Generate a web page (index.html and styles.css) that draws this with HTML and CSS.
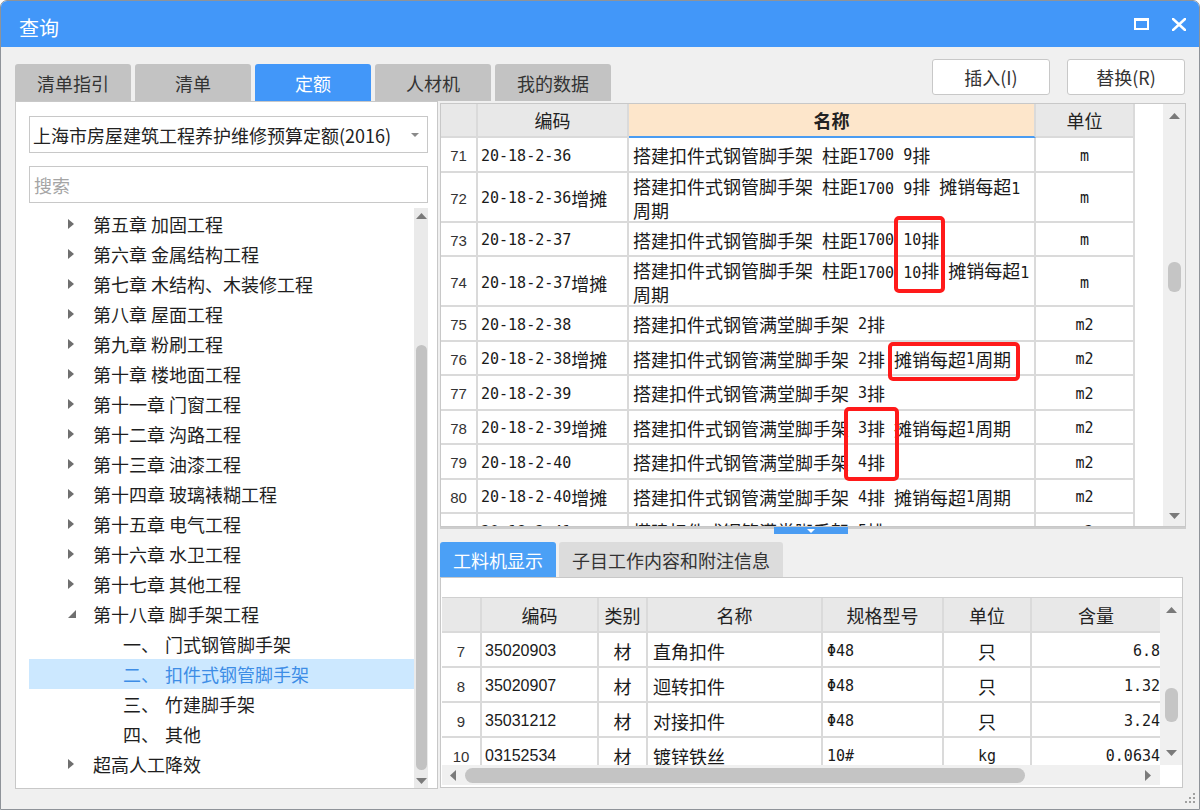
FILE: index.html
```html
<!DOCTYPE html>
<html lang="zh-CN">
<head>
<meta charset="utf-8">
<title>查询</title>
<link rel="stylesheet" href="styles.css">
</head>
<body>
<div class="win">
  <div class="titlebar">
    <span class="title">查询</span>
    <div class="wbtns">
      <svg width="15" height="12" viewBox="0 0 15 12"><rect x="1" y="1.5" width="13" height="9.5" fill="none" stroke="#fff" stroke-width="2"/><rect x="0" y="0" width="15" height="3" fill="#fff"/></svg>
      <svg width="14" height="13" viewBox="0 0 14 13"><path d="M1 1L13 12M13 1L1 12" stroke="#fff" stroke-width="2.6" stroke-linecap="square"/></svg>
    </div>
  </div>

  <div class="toprow">
    <div class="tabs">
      <div class="tab">清单指引</div>
      <div class="tab">清单</div>
      <div class="tab on">定额</div>
      <div class="tab">人材机</div>
      <div class="tab">我的数据</div>
    </div>
    <div class="actions">
      <div class="btn">插入(I)</div>
      <div class="btn">替换(R)</div>
    </div>
  </div>

  <div class="main">
    <div class="left">
      <div class="select">
        <span>上海市房屋建筑工程养护维修预算定额(2016)</span>
        <svg width="8" height="4" viewBox="0 0 8 4"><path d="M0 0H8L4 4Z" fill="#8a8a8a"/></svg>
      </div>
      <div class="search">搜索</div>
      <div class="tree">
        <div class="list">
          <div class="node"><span class="arr"><svg width="6" height="10" viewBox="0 0 6 10"><path d="M0 0L6 5L0 10Z" fill="#6f6f6f"/></svg></span>第五章 加固工程</div>
          <div class="node"><span class="arr"><svg width="6" height="10" viewBox="0 0 6 10"><path d="M0 0L6 5L0 10Z" fill="#6f6f6f"/></svg></span>第六章 金属结构工程</div>
          <div class="node"><span class="arr"><svg width="6" height="10" viewBox="0 0 6 10"><path d="M0 0L6 5L0 10Z" fill="#6f6f6f"/></svg></span>第七章 木结构、木装修工程</div>
          <div class="node"><span class="arr"><svg width="6" height="10" viewBox="0 0 6 10"><path d="M0 0L6 5L0 10Z" fill="#6f6f6f"/></svg></span>第八章 屋面工程</div>
          <div class="node"><span class="arr"><svg width="6" height="10" viewBox="0 0 6 10"><path d="M0 0L6 5L0 10Z" fill="#6f6f6f"/></svg></span>第九章 粉刷工程</div>
          <div class="node"><span class="arr"><svg width="6" height="10" viewBox="0 0 6 10"><path d="M0 0L6 5L0 10Z" fill="#6f6f6f"/></svg></span>第十章 楼地面工程</div>
          <div class="node"><span class="arr"><svg width="6" height="10" viewBox="0 0 6 10"><path d="M0 0L6 5L0 10Z" fill="#6f6f6f"/></svg></span>第十一章 门窗工程</div>
          <div class="node"><span class="arr"><svg width="6" height="10" viewBox="0 0 6 10"><path d="M0 0L6 5L0 10Z" fill="#6f6f6f"/></svg></span>第十二章 沟路工程</div>
          <div class="node"><span class="arr"><svg width="6" height="10" viewBox="0 0 6 10"><path d="M0 0L6 5L0 10Z" fill="#6f6f6f"/></svg></span>第十三章 油漆工程</div>
          <div class="node"><span class="arr"><svg width="6" height="10" viewBox="0 0 6 10"><path d="M0 0L6 5L0 10Z" fill="#6f6f6f"/></svg></span>第十四章 玻璃裱糊工程</div>
          <div class="node"><span class="arr"><svg width="6" height="10" viewBox="0 0 6 10"><path d="M0 0L6 5L0 10Z" fill="#6f6f6f"/></svg></span>第十五章 电气工程</div>
          <div class="node"><span class="arr"><svg width="6" height="10" viewBox="0 0 6 10"><path d="M0 0L6 5L0 10Z" fill="#6f6f6f"/></svg></span>第十六章 水卫工程</div>
          <div class="node"><span class="arr"><svg width="6" height="10" viewBox="0 0 6 10"><path d="M0 0L6 5L0 10Z" fill="#6f6f6f"/></svg></span>第十七章 其他工程</div>
          <div class="node"><span class="arr"><svg width="8" height="8" viewBox="0 0 8 8"><path d="M8 0V8H0Z" fill="#707070"/></svg></span>第十八章 脚手架工程</div>
          <div class="node child"><span class="ord">一、</span>门式钢管脚手架</div>
          <div class="node child sel"><span class="ord">二、</span>扣件式钢管脚手架</div>
          <div class="node child"><span class="ord">三、</span>竹建脚手架</div>
          <div class="node child"><span class="ord">四、</span>其他</div>
          <div class="node"><span class="arr"><svg width="6" height="10" viewBox="0 0 6 10"><path d="M0 0L6 5L0 10Z" fill="#6f6f6f"/></svg></span>超高人工降效</div>
        </div>
        <div class="vs">
          <svg width="11" height="6" viewBox="0 0 11 6"><path d="M0 6L5.5 0L11 6Z" fill="#7a7a7a"/></svg>
          <div class="thumb"></div>
          <svg class="down" width="11" height="6" viewBox="0 0 11 6"><path d="M0 0H11L5.5 6Z" fill="#7a7a7a"/></svg>
        </div>
      </div>
    </div>

    <div class="right">
      <div class="gtop">
        <div class="tbl">
          <div class="r h"><div class="c"></div><div class="c">编码</div><div class="c nm">名称</div><div class="c">单位</div><div class="f"></div></div>
          <div class="r"><div class="c num">71</div><div class="c code"><span class="a">20-18-2-36</span></div><div class="c nm">搭建扣件式钢管脚手架<span class="a"> </span>柱距<span class="a">1700 9</span>排</div><div class="c unit"><span class="a">m</span></div><div class="f"></div></div>
          <div class="r d"><div class="c num">72</div><div class="c code"><span class="a">20-18-2-36</span>增摊</div><div class="c nm"><div>搭建扣件式钢管脚手架<span class="a"> </span>柱距<span class="a">1700 9</span>排<span class="a"> </span>摊销每超<span class="a">1</span><br>周期</div></div><div class="c unit"><span class="a">m</span></div><div class="f"></div></div>
          <div class="r"><div class="c num">73</div><div class="c code"><span class="a">20-18-2-37</span></div><div class="c nm">搭建扣件式钢管脚手架<span class="a"> </span>柱距<span class="a">1700 10</span>排</div><div class="c unit"><span class="a">m</span></div><div class="f"></div></div>
          <div class="r d"><div class="c num">74</div><div class="c code"><span class="a">20-18-2-37</span>增摊</div><div class="c nm"><div>搭建扣件式钢管脚手架<span class="a"> </span>柱距<span class="a">1700 10</span>排<span class="a"> </span>摊销每超<span class="a">1</span><br>周期</div></div><div class="c unit"><span class="a">m</span></div><div class="f"></div></div>
          <div class="r"><div class="c num">75</div><div class="c code"><span class="a">20-18-2-38</span></div><div class="c nm">搭建扣件式钢管满堂脚手架<span class="a"> 2</span>排</div><div class="c unit"><span class="a">m2</span></div><div class="f"></div></div>
          <div class="r"><div class="c num">76</div><div class="c code"><span class="a">20-18-2-38</span>增摊</div><div class="c nm">搭建扣件式钢管满堂脚手架<span class="a"> 2</span>排<span class="a"> </span>摊销每超<span class="a">1</span>周期</div><div class="c unit"><span class="a">m2</span></div><div class="f"></div></div>
          <div class="r"><div class="c num">77</div><div class="c code"><span class="a">20-18-2-39</span></div><div class="c nm">搭建扣件式钢管满堂脚手架<span class="a"> 3</span>排</div><div class="c unit"><span class="a">m2</span></div><div class="f"></div></div>
          <div class="r"><div class="c num">78</div><div class="c code"><span class="a">20-18-2-39</span>增摊</div><div class="c nm">搭建扣件式钢管满堂脚手架<span class="a"> 3</span>排<span class="a"> </span>摊销每超<span class="a">1</span>周期</div><div class="c unit"><span class="a">m2</span></div><div class="f"></div></div>
          <div class="r"><div class="c num">79</div><div class="c code"><span class="a">20-18-2-40</span></div><div class="c nm">搭建扣件式钢管满堂脚手架<span class="a"> 4</span>排</div><div class="c unit"><span class="a">m2</span></div><div class="f"></div></div>
          <div class="r"><div class="c num">80</div><div class="c code"><span class="a">20-18-2-40</span>增摊</div><div class="c nm">搭建扣件式钢管满堂脚手架<span class="a"> 4</span>排<span class="a"> </span>摊销每超<span class="a">1</span>周期</div><div class="c unit"><span class="a">m2</span></div><div class="f"></div></div>
          <div class="r"><div class="c num">81</div><div class="c code"><span class="a">20-18-2-41</span></div><div class="c nm">搭建扣件式钢管满堂脚手架<span class="a"> 5</span>排</div><div class="c unit"><span class="a">m2</span></div><div class="f"></div></div>
        </div>
        <div class="vs2">
          <svg width="11" height="6" viewBox="0 0 11 6"><path d="M0 6L5.5 0L11 6Z" fill="#7a7a7a"/></svg>
          <div class="thumb"></div>
          <svg class="down" width="11" height="6" viewBox="0 0 11 6"><path d="M0 0H11L5.5 6Z" fill="#7a7a7a"/></svg>
        </div>
      </div>

      <div class="split">
        <div class="handle"><svg width="8" height="4" viewBox="0 0 8 4"><path d="M0 0H8L4 4Z" fill="#fff"/></svg></div>
      </div>

      <div class="btabs">
        <div class="btab on">工料机显示</div>
        <div class="btab wide">子目工作内容和附注信息</div>
      </div>

      <div class="gbot">
        <div class="frame">
          <div class="bmain">
            <div class="btbl">
              <div class="br h"><div class="c"></div><div class="c">编码</div><div class="c">类别</div><div class="c">名称</div><div class="c">规格型号</div><div class="c">单位</div><div class="c last">含量</div></div>
              <div class="br"><div class="c num">7</div><div class="c code">35020903</div><div class="c mid">材</div><div class="c nm">直角扣件</div><div class="c spec"><span class="a">Φ48</span></div><div class="c mid">只</div><div class="c qty last"><span class="a">6.8</span></div></div>
              <div class="br"><div class="c num">8</div><div class="c code">35020907</div><div class="c mid">材</div><div class="c nm">迴转扣件</div><div class="c spec"><span class="a">Φ48</span></div><div class="c mid">只</div><div class="c qty last"><span class="a">1.32</span></div></div>
              <div class="br"><div class="c num">9</div><div class="c code">35031212</div><div class="c mid">材</div><div class="c nm">对接扣件</div><div class="c spec"><span class="a">Φ48</span></div><div class="c mid">只</div><div class="c qty last"><span class="a">3.24</span></div></div>
              <div class="br"><div class="c num">10</div><div class="c code">03152534</div><div class="c mid">材</div><div class="c nm">镀锌铁丝</div><div class="c spec"><span class="a">10#</span></div><div class="c mid"><span class="a">kg</span></div><div class="c qty last"><span class="a">0.0634</span></div></div>
            </div>
            <div class="vs3">
              <svg width="11" height="6" viewBox="0 0 11 6"><path d="M0 6L5.5 0L11 6Z" fill="#7a7a7a"/></svg>
              <div class="thumb"></div>
              <svg class="down" width="11" height="6" viewBox="0 0 11 6"><path d="M0 0H11L5.5 6Z" fill="#7a7a7a"/></svg>
            </div>
          </div>
          <div class="hs">
            <div class="track">
              <svg width="6" height="11" viewBox="0 0 6 11"><path d="M6 0V11L0 5.5Z" fill="#7a7a7a"/></svg>
              <div class="hthumb"></div>
              <svg class="rarr" width="6" height="11" viewBox="0 0 6 11"><path d="M0 0V11L6 5.5Z" fill="#7a7a7a"/></svg>
            </div>
            <div class="corner"></div>
          </div>
        </div>
      </div>
    </div>
  </div>

  <svg class="grip" width="12" height="12" viewBox="0 0 12 12"><g fill="#a0a0a0"><rect x="9" y="1" width="2" height="2"/><rect x="9" y="5" width="2" height="2"/><rect x="5" y="5" width="2" height="2"/><rect x="9" y="9" width="2" height="2"/><rect x="5" y="9" width="2" height="2"/><rect x="1" y="9" width="2" height="2"/></g></svg>

  <div class="mark m1"></div>
  <div class="mark m2"></div>
  <div class="mark m3"></div>
</div>
</body>
</html>
```

FILE: styles.css
```css
* { box-sizing: border-box; }
html, body { margin: 0; padding: 0; }
body {
  width: 1200px;
  height: 810px;
  overflow: hidden;
  background: #fff;
  font-family: "Noto Sans CJK SC", "Noto Sans", sans-serif;
  color: #222;
}
.win {
  position: relative;
  width: 1200px;
  height: 810px;
  border: 1px solid #8f9399;
  border-radius: 7px 7px 0 0;
  background: #f0f0f0;
  overflow: hidden;
  display: flex;
  flex-direction: column;
}
.titlebar {
  height: 46px;
  flex: none;
  background: #4297f9;
  display: flex;
  align-items: center;
  justify-content: space-between;
  padding: 0 13px 0 18px;
  color: #fff;
}
.title { font-size: 20px; margin-top: 6px; }
.wbtns { display: flex; align-items: center; gap: 23px; }
.wbtns svg { display: block; }

.toprow {
  height: 54px;
  flex: none;
  display: flex;
  justify-content: space-between;
  padding: 0 14px;
}
.tabs { display: flex; gap: 4px; align-self: flex-end; }
.tab {
  width: 116px;
  height: 37px;
  background: #c3c3c3;
  border-radius: 3px 3px 0 0;
  font-size: 18px;
  color: #333;
  display: flex;
  align-items: center;
  justify-content: center;
}
.tab.on { background: #4297f9; color: #fff; }
.actions { display: flex; gap: 17px; margin-top: 12px; }
.btn {
  width: 118px;
  height: 36px;
  background: #fff;
  border: 1px solid #c8c8c8;
  border-radius: 3px;
  font-size: 18px;
  color: #333;
  display: flex;
  align-items: center;
  justify-content: center;
}

.main {
  flex: none;
  height: 688px;
  display: flex;
  gap: 2px;
  padding-left: 14px;
}
.left {
  width: 423px;
  background: #fff;
  border: 1px solid #c8c8c8;
  padding: 14px 9px 0 13px;
  display: flex;
  flex-direction: column;
}
.select {
  flex: none;
  height: 37px;
  border: 1px solid #c8c8c8;
  display: flex;
  align-items: center;
  justify-content: space-between;
  padding: 0 8px 0 3px;
  font-size: 18px;
  color: #222;
  white-space: nowrap;
}
.search {
  flex: none;
  height: 37px;
  margin-top: 13px;
  border: 1px solid #c8c8c8;
  padding-left: 4px;
  font-size: 18px;
  color: #a5a5a5;
  display: flex;
  align-items: center;
}
.tree {
  flex: 1;
  margin-top: 5px;
  display: flex;
  min-height: 0;
}
.list { flex: 1; padding-top: 1px; overflow: hidden; }
.node {
  height: 30px;
  display: flex;
  align-items: center;
  font-size: 18px;
  color: #1e1e1e;
  white-space: nowrap;
}
.node .arr {
  width: 8px;
  margin-left: 39px;
  margin-right: 17px;
  display: flex;
  align-items: center;
}
.node.child { padding-left: 94px; }
.node .ord { display: inline-block; width: 42px; }
.node.sel { background: #cce8ff; color: #3d8de6; }

.vs {
  width: 14px;
  background: #eaeaea;
  display: flex;
  flex-direction: column;
  align-items: center;
  padding: 5px 0 4px;
}
.vs svg, .vs2 svg, .vs3 svg, .hs svg { display: block; flex: none; }
.vs .thumb {
  margin-top: 126px;
  width: 11px;
  height: 425px;
  background: #c2c2c2;
  border-radius: 6px;
}
.down { margin-top: auto; }

.right {
  width: 746px;
  display: flex;
  flex-direction: column;
  padding-top: 2px;
}
.gtop {
  flex: none;
  height: 424px;
  border: 1px solid #c8c8c8;
  background: #fff;
  display: flex;
  overflow: hidden;
}
.tbl { width: 722px; overflow: hidden; }
.r {
  display: grid;
  grid-template-columns: 37px 151px 407px 99px 28px;
  height: 34.5px;
  font-size: 18px;
  color: #1a1a1a;
}
.r.h { height: 34px; }
.r.d { height: 50px; }
.r .c {
  border-right: 2px solid #dadada;
  border-bottom: 2px solid #dadada;
  display: flex;
  align-items: center;
  white-space: nowrap;
  overflow: hidden;
  padding-top: 3px;
}
.r.h .c { background: #e8e8e8; justify-content: center; color: #222; padding-top: 0; }
.r.h .nm { background: #fde6cb; font-weight: bold; border-bottom-color: #4a9cf2; padding-left: 0; }
.c.num {
  justify-content: center;
  font-family: "Liberation Sans", sans-serif;
  font-size: 15px;
  color: #333;
}
.r .code { padding-left: 3px; }
.r .nm { padding-left: 4px; line-height: 21px; }
.c.unit { justify-content: center; }
.a {
  font-family: "DejaVu Sans Mono", monospace;
  font-size: 15px;
  white-space: pre;
}

.vs2 {
  width: 22px;
  background: #efefef;
  display: flex;
  flex-direction: column;
  align-items: center;
  padding: 9px 0 7px;
}
.vs2 .thumb {
  margin-top: 143px;
  width: 13px;
  height: 30px;
  background: #c5c5c5;
  border-radius: 6px;
}

.split {
  flex: none;
  height: 15px;
  background: linear-gradient(#cdcdcd, #cdcdcd) top left / 100% 2px no-repeat;
}
.handle {
  margin-left: 334px;
  width: 74px;
  height: 7px;
  background: #4a9cf2;
  display: flex;
  justify-content: center;
  align-items: center;
}
.handle svg { display: block; }

.btabs { flex: none; height: 35px; display: flex; gap: 3px; }
.btab {
  width: 116px;
  background: #dcdcdc;
  border-radius: 3px 3px 0 0;
  font-size: 18px;
  color: #333;
  display: flex;
  align-items: center;
  justify-content: center;
}
.btab.on { background: #4ba0f6; color: #fff; }
.btab.wide { width: 224px; }

.gbot {
  flex: none;
  width: 743px;
  height: 211px;
  border: 1px solid #c8c8c8;
  background: #fff;
  padding: 19px 0 2px 1px;
}
.frame {
  height: 188px;
  border-top: 1px solid #d0d0d0;
  display: flex;
  flex-direction: column;
}
.bmain { flex: none; height: 167px; display: flex; }
.btbl { width: 718px; overflow: hidden; }
.br {
  display: grid;
  grid-template-columns: 40px 117px 49px 175px 121px 88px 128px;
  height: 35px;
  font-size: 18px;
  color: #1a1a1a;
}
.br .c {
  border-right: 2px solid #dadada;
  border-bottom: 2px solid #dadada;
  display: flex;
  align-items: center;
  white-space: nowrap;
  overflow: hidden;
  padding-top: 3px;
}
.br .c.last { border-right: none; }
.br.h .c { background: #e8e8e8; justify-content: center; color: #222; padding-top: 0; }
.br .code {
  padding-left: 3px;
  font-family: "Liberation Sans", sans-serif;
  font-size: 16px;
}
.br .mid { justify-content: center; }
.br .nm { padding-left: 5px; }
.br .spec { padding-left: 4px; }
.br .qty { justify-content: flex-end; }

.vs3 {
  width: 22px;
  background: #f0f0f0;
  display: flex;
  flex-direction: column;
  align-items: center;
  padding: 9px 0 9px;
}
.vs3 .thumb {
  margin-top: 75px;
  width: 13px;
  height: 34px;
  background: #c5c5c5;
  border-radius: 6px;
}
.hs { flex: none; height: 20px; display: flex; }
.hs .track {
  width: 718px;
  background: #f0f0f0;
  display: flex;
  align-items: center;
}
.hs .track > svg:first-child { margin-left: 8px; }
.hthumb {
  margin-left: 9px;
  width: 560px;
  height: 15px;
  background: #c4c4c4;
  border-radius: 8px;
}
.hs .rarr { margin-left: auto; margin-right: 9px; }
.corner { width: 22px; background: #fff; }

.grip { position: absolute; right: 3px; bottom: 5px; }

.mark {
  position: absolute;
  border: 4px solid #ff1a1a;
  border-radius: 5px;
}
.m1 { left: 893px; top: 215px; width: 51px; height: 77px; }
.m2 { left: 887px; top: 341px; width: 132px; height: 39px; }
.m3 { left: 843px; top: 406px; width: 55px; height: 74px; }
```
